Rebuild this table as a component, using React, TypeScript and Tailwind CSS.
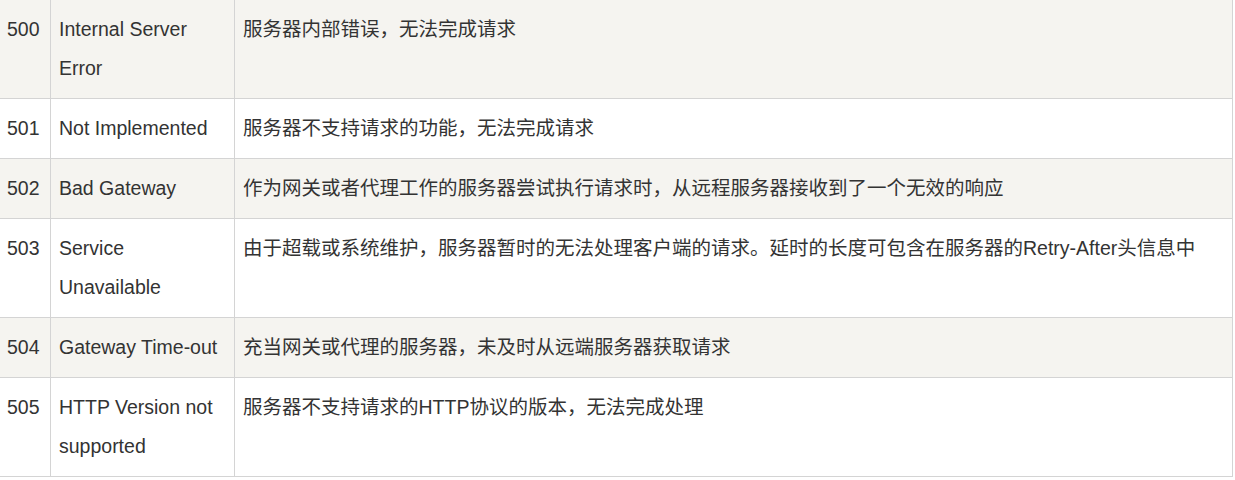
const rows = [
  { code: "500", name: "Internal Server Error", desc: "服务器内部错误，无法完成请求" },
  { code: "501", name: "Not Implemented", desc: "服务器不支持请求的功能，无法完成请求" },
  { code: "502", name: "Bad Gateway", desc: "作为网关或者代理工作的服务器尝试执行请求时，从远程服务器接收到了一个无效的响应" },
  { code: "503", name: "Service Unavailable", desc: "由于超载或系统维护，服务器暂时的无法处理客户端的请求。延时的长度可包含在服务器的Retry-After头信息中" },
  { code: "504", name: "Gateway Time-out", desc: "充当网关或代理的服务器，未及时从远端服务器获取请求" },
  { code: "505", name: "HTTP Version not supported", desc: "服务器不支持请求的HTTP协议的版本，无法完成处理" },
];

export default function App() {
  return (
    <div className="w-[1235px] h-[480px] overflow-hidden bg-white">
      <table
        className="table-fixed border-collapse ml-[-1px] mt-[-1px] w-[1234px] text-[19.5px] leading-[39px] text-[#333]"
        style={{ fontFamily: '"Liberation Sans", Arial, "Noto Sans CJK SC", sans-serif' }}
      >
        <colgroup>
          <col className="w-[51px]" />
          <col className="w-[184px]" />
          <col />
        </colgroup>
        <tbody>
          {rows.map((r, i) => (
            <tr key={r.code} className={i % 2 === 0 ? "bg-[#f5f4f0]" : "bg-white"}>
              <td className="border border-[#d4d4d4] px-[7px] py-[10px] align-top">{r.code}</td>
              <td className="border border-[#d4d4d4] pl-[8px] pr-[6px] py-[10px] align-top">{r.name}</td>
              <td className="border border-[#d4d4d4] pl-[8px] pr-[6px] py-[10px] align-top">{r.desc}</td>
            </tr>
          ))}
        </tbody>
      </table>
    </div>
  );
}
